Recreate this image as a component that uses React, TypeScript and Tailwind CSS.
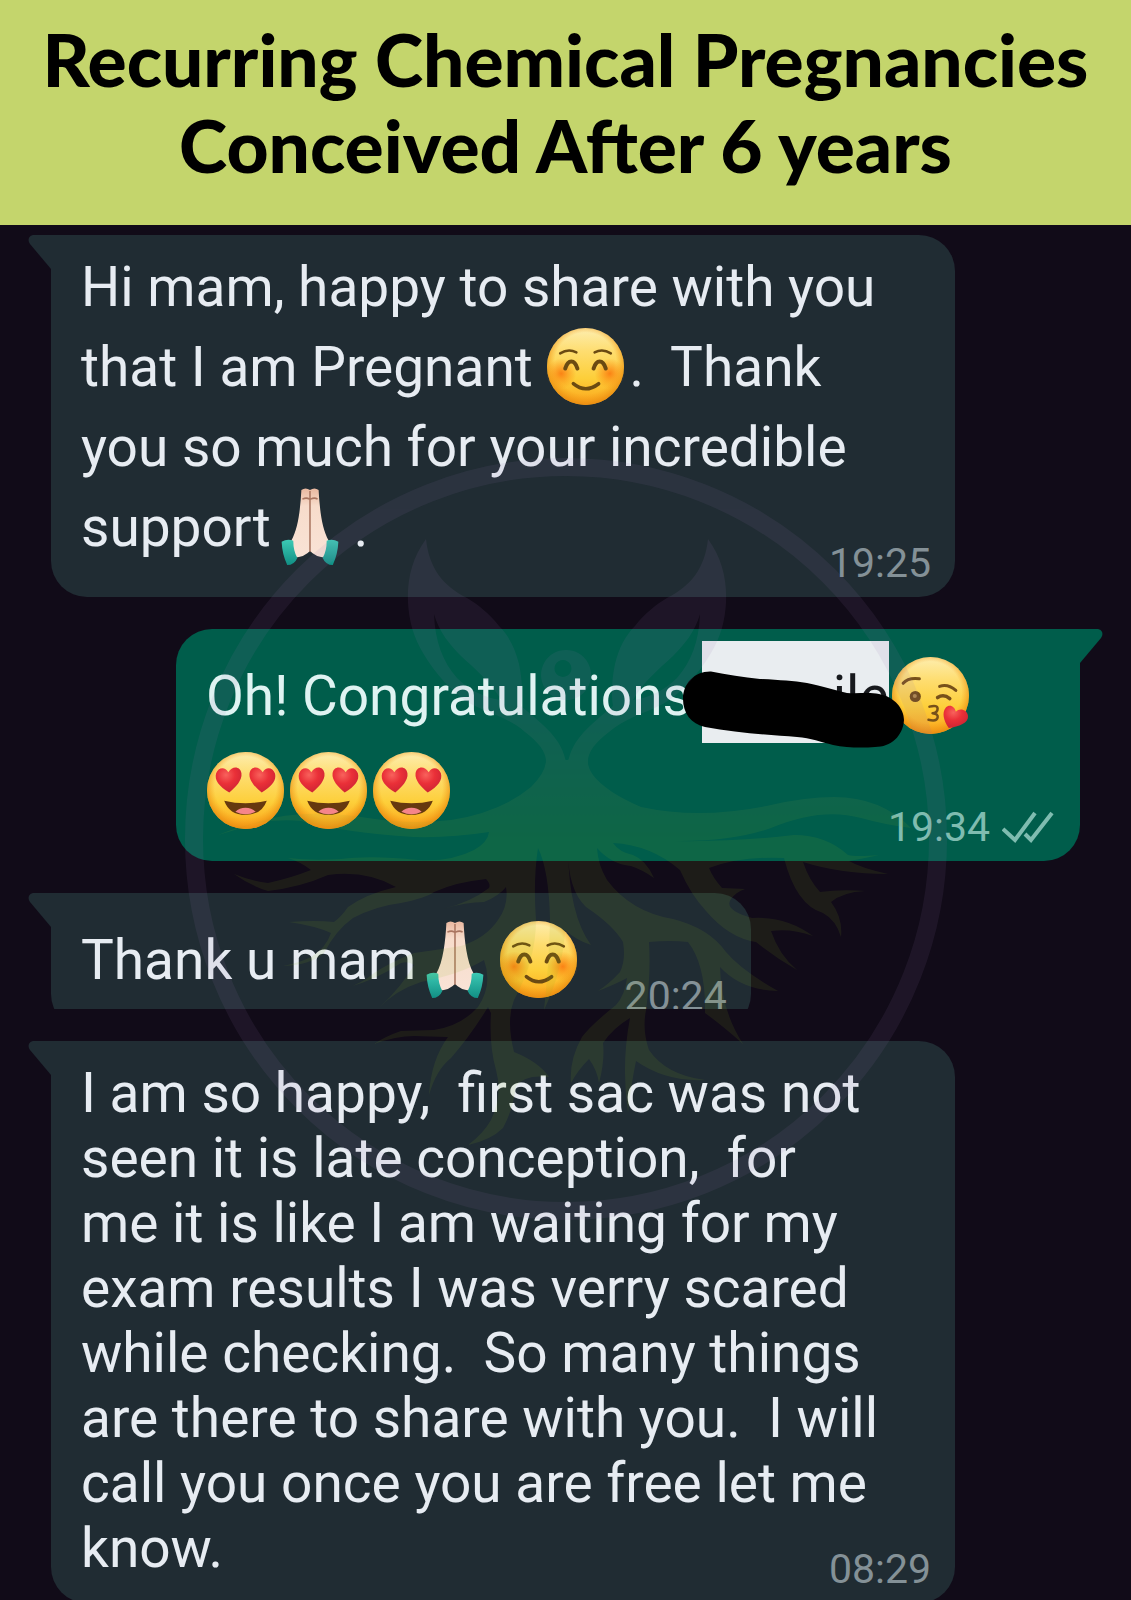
import React from 'react';
import { clsx } from 'clsx';

type EmojiName = 'smile' | 'pray' | 'hearts' | 'kiss';

const emojiLabels: Record<EmojiName, string> = {
  smile: 'smiling face',
  pray: 'folded hands',
  hearts: 'smiling face with heart eyes',
  kiss: 'face blowing a kiss',
};

function EmojiDefs() {
  return (
    <svg className="absolute size-0" aria-hidden="true">
      <defs>
        <linearGradient id="face" x1="0" y1="0" x2="0" y2="1">
          <stop offset="0" stopColor="#fdeeb0" />
          <stop offset="0.3" stopColor="#fedd70" />
          <stop offset="0.65" stopColor="#fdcf3a" />
          <stop offset="1" stopColor="#fba41c" />
        </linearGradient>
        <radialGradient id="rim" cx="0.5" cy="0.46" r="0.54">
          <stop offset="0.74" stopColor="#f59a16" stopOpacity="0" />
          <stop offset="1" stopColor="#e88a10" stopOpacity="0.9" />
        </radialGradient>
        <radialGradient id="blush">
          <stop offset="0" stopColor="#fb7a10" stopOpacity="0.9" />
          <stop offset="1" stopColor="#fb8a10" stopOpacity="0" />
        </radialGradient>
        <radialGradient id="heart" cx="0.4" cy="0.3" r="0.7">
          <stop offset="0" stopColor="#f8625c" />
          <stop offset="0.5" stopColor="#ea3038" />
          <stop offset="1" stopColor="#cf2434" />
        </radialGradient>
        <linearGradient id="skin" x1="0" y1="0" x2="0" y2="1">
          <stop offset="0" stopColor="#e9b8a0" />
          <stop offset="0.25" stopColor="#f7dccb" />
          <stop offset="1" stopColor="#f9e3d6" />
        </linearGradient>
        <linearGradient id="cuff" x1="0" y1="0" x2="0" y2="1">
          <stop offset="0" stopColor="#3cc9b4" />
          <stop offset="1" stopColor="#118f84" />
        </linearGradient>
      </defs>
    </svg>
  );
}

function Face() {
  return (
    <>
      <circle cx="38" cy="38" r="38" fill="url(#face)" />
      <circle cx="38" cy="38" r="38" fill="url(#rim)" />
    </>
  );
}

function Emoji({ name }: { name: EmojiName }) {
  return (
    <svg
      viewBox="0 0 76 76"
      role="img"
      aria-label={emojiLabels[name]}
      className="inline-block w-[77px] h-[77px] ml-px mr-[5px] align-[-19px]"
    >
      {name === 'smile' && (
        <>
          <Face />
          <circle cx="14" cy="45" r="15" fill="url(#blush)" />
          <circle cx="62" cy="45" r="15" fill="url(#blush)" />
          <g fill="none" stroke="#6b4a12" strokeLinecap="round">
            <path d="M13 25Q21 20 29 24M47 24Q55 20 63 25" strokeWidth="2.500" />
            <path d="M18 40Q20 33 24 33Q28 33 30 40M46 40Q48 33 52 33Q56 33 58 40" strokeWidth="4" />
            <path d="M26 55Q38 65 51 55" strokeWidth="3.500" />
          </g>
        </>
      )}
      {name === 'hearts' && (
        <>
          <Face />
          <path
            d="M22 40C12 34 7 28 9 21C11 15 18 14 21 20C25 13 33 14 34 21C35 28 28 35 22 40Z"
            fill="url(#heart)"
          />
          <path
            d="M54 40C48 35 41 28 42 21C43 14 51 13 55 20C58 14 65 15 67 21C69 28 64 34 54 40Z"
            fill="url(#heart)"
          />
          <path d="M17 48Q38 53 59 48Q54 62 38 62Q22 62 17 48Z" fill="#66390f" />
          <path d="M28 59Q32 55 38 55Q44 55 48 59Q38 64 28 59Z" fill="#f5858a" />
        </>
      )}
      {name === 'kiss' && (
        <>
          <Face />
          <g fill="none" stroke="#77501a" strokeLinecap="round" strokeLinejoin="round">
            <path d="M11 26Q16 20 27 21.500M47 29Q55 26 63 33" strokeWidth="3" />
            <path d="M45 40Q51 36 57 41" strokeWidth="3.500" />
            <path d="M37 49Q45 47 45 51Q45 55 40 55.500Q46 56 45 60Q44 64 36 62" strokeWidth="2.500" />
          </g>
          <circle cx="23" cy="39" r="5.500" fill="#6f4a18" />
          <circle cx="22.500" cy="38.500" r="2" fill="#b08a4c" />
          <path
            d="M56 70C51 63 49 55 53 50C57 46 62 49 63 54C67 50 74 52 75 58C76 65 66 69 56 70Z"
            fill="url(#heart)"
          />
        </>
      )}
      {name === 'pray' && (
        <>
          <path
            d="M29 2Q33 -1 37.500 2Q42 -1 46 2C47 20 49 40 56 52L62 58L54 69Q42 68 37.500 62Q33 68 21 69L13 58L19 52C26 40 28 20 29 2Z"
            fill="url(#skin)"
          />
          <path d="M37.500 3V63M30 11Q34 9 37 11M38 11Q42 9 45 11" fill="none" stroke="#a97560" strokeWidth="1.500" />
          <path d="M9.500 53Q15 50 21 52Q21 62 25 69Q22 76 15 76Q10 65 9.500 53Z" fill="url(#cuff)" />
          <path d="M65.500 53Q60 50 54 52Q54 62 50 69Q53 76 60 76Q65 65 65.500 53Z" fill="url(#cuff)" />
        </>
      )}
    </svg>
  );
}

function DoubleTick() {
  return (
    <svg
      viewBox="0 0 52 32"
      role="img"
      aria-label="delivered"
      className="w-[52px] h-8"
      fill="none"
      stroke="#7fbcb0"
      strokeWidth="4"
    >
      <path d="M1 18L13 29L33 2M23 23L29 29L50 2" />
    </svg>
  );
}

// The name is struck through with a marker stroke that runs past both ends of its box.
function RedactedName() {
  return (
    <span className="relative z-10 inline-block w-[187px] pt-2 -mt-2 -ml-[3px] mr-0.5 leading-[94px] text-right bg-[#e9edf0] text-[#17191d]">
      ile
      <svg viewBox="0 0 221 77" className="absolute -left-[19px] top-[30px] w-[221px] h-[77px]" aria-hidden="true">
        <path
          d="M28 .500C44 4 60 6 77 8C96 9 110 10 124 12C140 15 150 19 164 22C174 23 186 21 196 23C212 26 221 38 221 49C220 65 208 76 192 76C180 77 164 77 150 74C138 71 128 67 114 66C88 64 54 62 22 56C8 53 0 42 0 28C0 12 12 0 28 .500Z"
          fill="#000"
        />
      </svg>
    </span>
  );
}

interface BubbleProps {
  time: string;
  sent?: boolean;
  className?: string;
  textClassName: string;
  children: React.ReactNode;
}

function Bubble({ time, sent, className, textClassName, children }: BubbleProps) {
  return (
    <article
      className={clsx(
        'relative grid',
        sent
          ? 'ml-auto rounded-[36px] rounded-tr-none bg-[#005d4b] text-[#dff3f2]'
          : 'rounded-[36px] rounded-tl-none bg-[#202c33] text-[#e7ecf2]',
        className
      )}
    >
      <svg
        viewBox="0 0 24 35"
        aria-hidden="true"
        className={clsx('absolute top-0 w-6 h-[35px]', sent ? '-right-[23px] -scale-x-100' : '-left-[23px]')}
      >
        <path d="M24 0H6C1 0 -1 5 2 9L23 34H24Z" fill={sent ? '#005d4b' : '#202c33'} />
      </svg>
      <p className={clsx('col-start-1 row-start-1 pl-[30px] text-[55px] whitespace-pre', textClassName)}>{children}</p>
      <footer
        className={clsx(
          'col-start-1 row-start-1 self-end justify-self-end flex items-center gap-3 mb-2.5 text-[41px] leading-[48px]',
          sent ? 'mr-[26px] text-[#7fbcb0]' : 'mr-6 text-[#849197]'
        )}
      >
        <time>{time}</time>
        {sent && <DoubleTick />}
      </footer>
    </article>
  );
}

const leaf =
  'M425 539C411 558 406 580 407 602C408 622 413 638 422 653C434 673 450 692 470 704C490 714 508 718 524 732C538 743 546 752 545 764L566 768C564 752 558 742 550 733C542 724 532 716 520 706C522 694 521 678 518 664C514 648 508 636 498 626C488 613 476 604 466 598C442 586 428 568 425 539ZM433 614C438 632 449 645 460 656C474 669 490 682 500 700C484 698 468 690 456 678C442 662 434 642 433 614Z';

const roots =
  'M545 760Q545 772 530 787Q500 812 450 820Q410 825 367 818Q300 808 257 822Q235 830 217 835Q260 817 300 821Q340 832 413 837Q450 838 488 832Q487 842 473 850Q450 862 417 860Q370 855 340 859Q310 861 287 858Q300 862 310 870Q290 878 267 883Q250 881 233 874Q250 886 267 891Q300 887 327 875Q365 870 395 887Q365 894 347 907Q340 917 333 922Q315 920 288 922Q315 926 330 933Q325 948 310 957Q298 963 282 966Q310 965 323 953Q335 930 352 918Q375 906 400 903Q425 898 433 892Q455 882 485 879Q490 884 488 888Q470 902 442 909Q465 902 483 902Q498 896 505 887Q508 905 497 920Q485 938 460 946Q435 950 413 953Q390 962 373 973Q360 984 345 988Q375 980 400 963Q408 961 413 965Q402 985 378 1008Q395 990 420 982Q460 974 483 960Q492 985 477 1007Q460 1026 433 1030L400 1031Q385 1036 373 1044Q395 1036 413 1036L447 1037Q430 1060 428 1095Q435 1070 450 1058Q470 1035 487 1007L490 1013Q488 1045 495 1070Q502 1095 490 1120Q482 1134 467 1145Q490 1140 502 1128Q512 1110 515 1086Q524 1074 548 1077Q538 1062 513 1052Q505 1020 513 1000Q535 960 535 920Q532 880 537 848Q548 870 549 920Q548 965 543 1010Q562 970 564 930Q575 940 590 945Q568 915 567 850Q567 890 585 907Q612 925 622 942Q625 960 619 972Q608 984 597 991Q615 984 626 978Q624 995 615 1005Q590 1025 581 1037Q568 1060 570 1083Q577 1070 588 1059Q596 1070 598 1083Q604 1060 602 1043Q612 1028 629 1018Q620 1065 627 1113Q630 1085 635 1061Q665 1082 704 1080Q665 1075 648 1050Q641 1030 645 1010Q650 975 648 942Q670 940 687 942Q705 965 704 1013Q722 1026 742 1044Q720 1010 719 967Q740 990 777 991Q740 970 725 952Q708 928 672 919Q630 912 606 880Q597 865 596 848Q610 864 630 866Q642 870 653 878Q645 860 632 855Q618 852 612 843Q650 845 679 870Q690 895 705 911Q728 938 755 942Q775 958 796 970Q778 955 770 931Q790 928 812 936Q785 916 751 918Q722 910 730 899Q735 892 744 889L721 888Q712 878 708 868Q740 856 783 858Q795 905 822 913Q835 920 840 937Q842 918 830 902Q842 892 864 891Q840 889 819 892Q808 880 802 862Q840 874 887 874Q860 868 848 861Q865 858 878 855Q855 857 847 855Q825 835 793 835Q735 842 673 841Q730 842 770 828Q820 807 860 818Q885 825 910 828Q880 797 833 797Q805 797 770 805Q700 820 640 807Q605 792 592 775Q585 765 587 755L566 760Z';

function Watermark() {
  return (
    <svg
      viewBox="184 458 762 762"
      aria-hidden="true"
      className="absolute top-[458px] left-1/2 -translate-x-1/2 z-20 w-[762px] h-[762px] pointer-events-none"
    >
      <defs>
        <linearGradient id="growth" gradientUnits="userSpaceOnUse" x1="0" y1="700" x2="0" y2="840">
          <stop offset="0" stopColor="#9573af" />
          <stop offset="1" stopColor="#8cb41e" />
        </linearGradient>
      </defs>
      <g opacity="0.100">
        <circle cx="565" cy="839" r="372" fill="none" stroke="#9573af" strokeWidth="18" />
        <g fill="url(#growth)" fillRule="evenodd">
          <path d={leaf} />
          <path d={leaf} transform="translate(1132 0) scale(-1 1)" />
          <path d="M565 650a25 25 0 1 0 .1 0ZM562 660a8.500 8.500 0 1 1 -.1 0Z" />
        </g>
        <path d={roots} fill="url(#growth)" />
      </g>
    </svg>
  );
}

export default function App() {
  return (
    <div className="relative flex flex-col h-screen overflow-hidden bg-[#110b18] font-[Roboto,sans-serif]">
      <EmojiDefs />
      <header className="shrink-0 px-4 pt-4 pb-[37px] bg-[#c4d56c]">
        <h1 className="text-center text-[73px] leading-[86px] font-black text-black font-[Lato,sans-serif]">
          Recurring Chemical Pregnancies
          <br />
          Conceived After 6 years
        </h1>
      </header>
      <main className="flex flex-col shrink-0 gap-8 px-[51px] pt-2.5">
        <Bubble time="19:25" className="w-full max-w-[904px]" textClassName="pt-3 pb-[30px] leading-[80px]">
          Hi mam, happy to share with you
          <br />
          that I am Pregnant <Emoji name="smile" />
          {'.  Thank'}
          <br />
          you so much for your incredible
          <br />
          support
          <Emoji name="pray" />.
        </Bubble>

        <Bubble time="19:34" sent className="w-full max-w-[904px]" textClassName="pt-5 pb-[22px] leading-[95px]">
          Oh! Congratulations <RedactedName />
          <Emoji name="kiss" />
          <br />
          <Emoji name="hearts" />
          <Emoji name="hearts" />
          <Emoji name="hearts" />
        </Bubble>

        {/* this message is cut off just under its time */}
        <div className="h-[116px] -ml-6 pl-6 overflow-hidden">
          <Bubble time="20:24" className="w-[68%]" textClassName="pt-5 pb-[22px] leading-[95px]">
            Thank u mam
            <Emoji name="pray" />
            <Emoji name="smile" />
          </Bubble>
        </div>

        <Bubble time="08:29" className="w-full max-w-[904px]" textClassName="pt-5 pb-[22px] leading-[65px]">
          {'I am so happy,  first sac was not'}
          <br />
          {'seen it is late conception,  for'}
          <br />
          me it is like I am waiting for my
          <br />
          exam results I was verry scared
          <br />
          {'while checking.  So many things'}
          <br />
          {'are there to share with you.  I will'}
          <br />
          call you once you are free let me
          <br />
          know.
        </Bubble>
      </main>
      <Watermark />
    </div>
  );
}
